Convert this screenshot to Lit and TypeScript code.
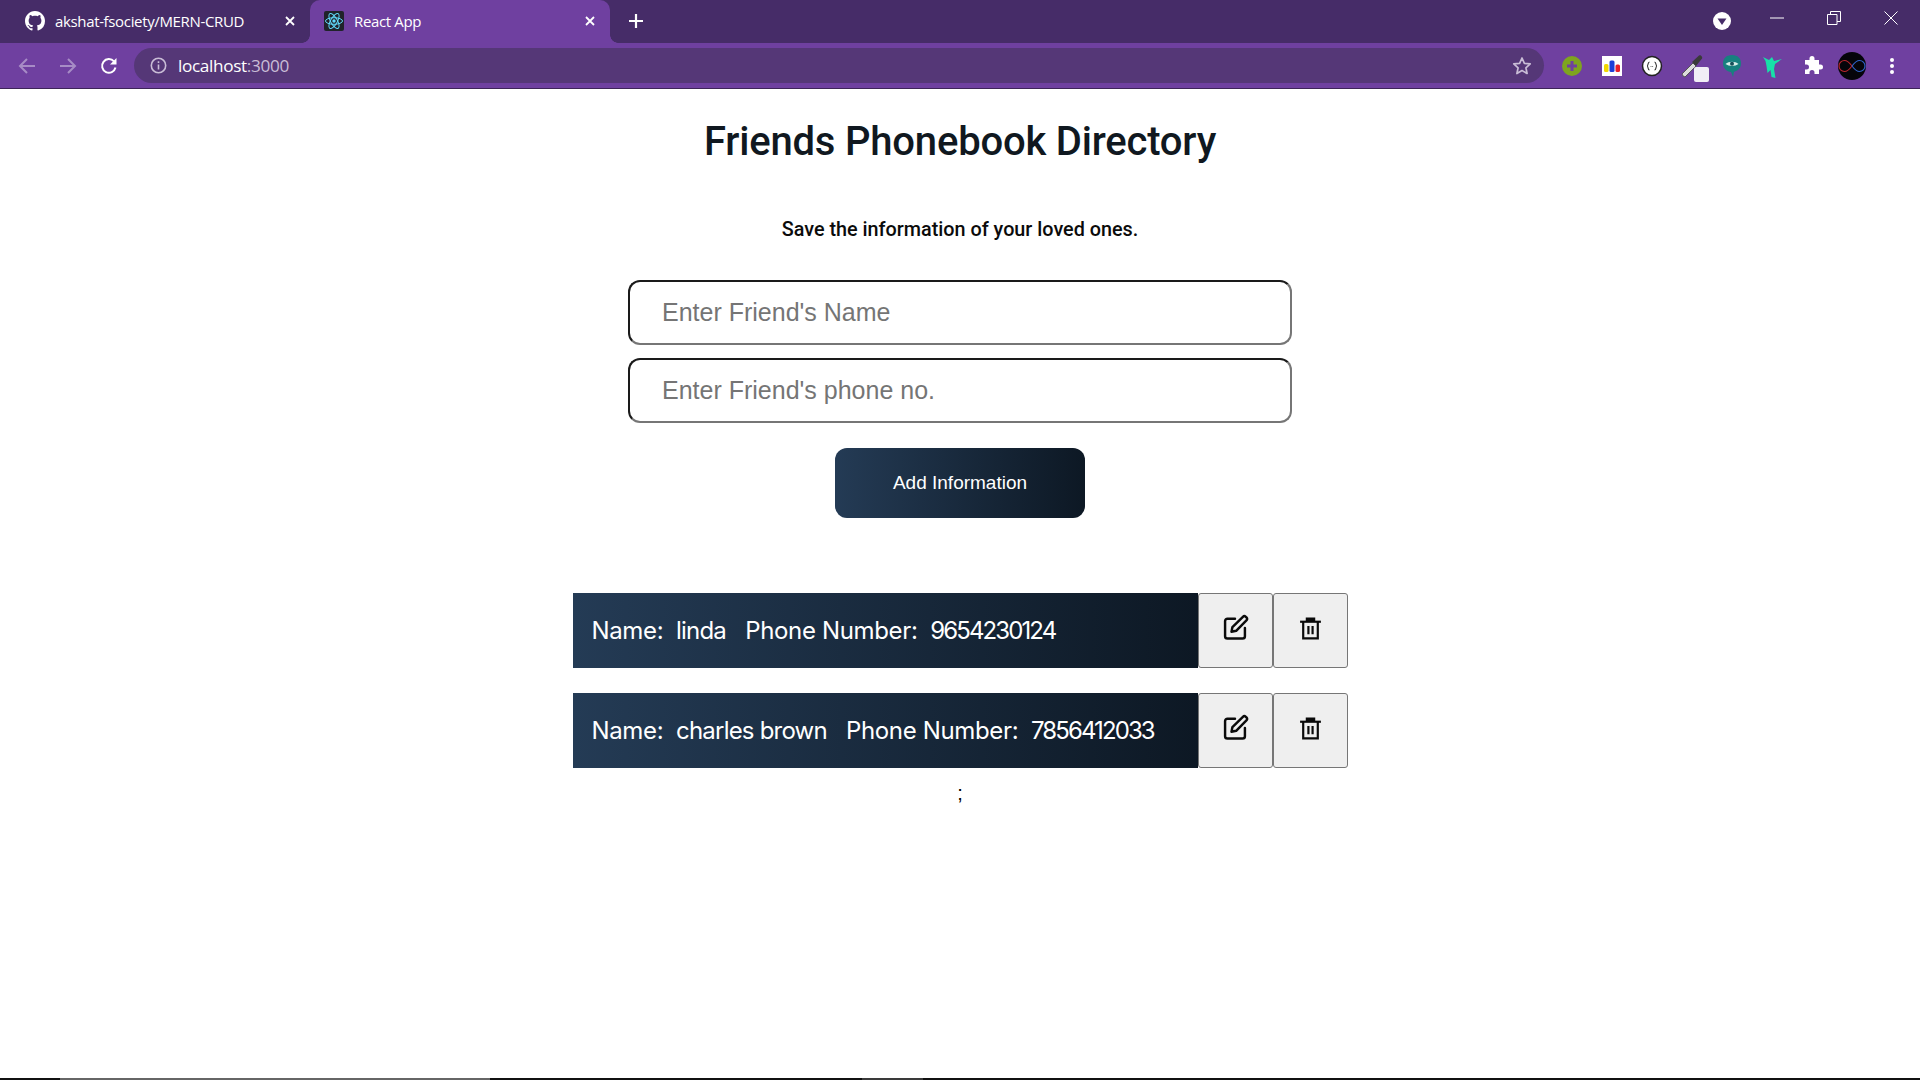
import { LitElement, html, css, svg } from "lit";
import { customElement } from "lit/decorators.js";

const close = svg`<path d="M2 2 10 10M10 2 2 10" stroke="currentColor" stroke-width="1.8" fill="none"/>`;

@customElement("app-root")
export class AppRoot extends LitElement {
  static styles = css`
    :host { display: block; height: 1080px; background: #fff; overflow: hidden; font-family: Roboto, sans-serif; }
    .shell { display: flex; flex-direction: column; height: 1080px; }
    .strip { height: 43px; flex: none; background: #462c68; display: flex; align-items: flex-start; color: #fff; }
    .tab { width: 300px; height: 43px; flex: none; display: flex; align-items: center; box-sizing: border-box; font-family: "Open Sans", sans-serif; font-size: 15px; letter-spacing: -0.35px; position: relative; }
    .tab.first { width: 310px; padding: 0 12px 1px 25px; }
    .tab.active { padding: 0 12px 1px 14px; background: #6f40a0; border-radius: 10px 10px 0 0; }
    .tab.active::before, .tab.active::after { content: ""; position: absolute; bottom: 0; width: 8px; height: 8px; background: radial-gradient(circle at 0 0, #462c68 7.5px, #6f40a0 8px); }
    .tab.active::before { left: -8px; }
    .tab.active::after { right: -8px; transform: scaleX(-1); }
    .fav { width: 20px; height: 20px; flex: none; margin-right: 10px; }
    .title { flex: 1; white-space: nowrap; overflow: hidden; }
    .x { width: 12px; height: 12px; margin: 0 2px 0 0; flex: none; color: #fff; }
    .plus { width: 16px; height: 16px; margin: 0 0 1px 18px; align-self: center; }
    .spacer { flex: 1; }
    .caps { display: flex; align-items: center; height: 36px; }
    .drop { width: 18px; height: 18px; margin-top: 6px; margin-right: 39px; }
    .cap { width: 14px; height: 14px; margin-right: 43px; }
    .cap.last { margin-right: 22px; }
    .bar { height: 45px; flex: none; background: #6f40a0; border-bottom: 1px solid #3d2458; display: flex; align-items: center; padding: 0 22px 0 18px; color: #fff; }
    .nav { width: 18px; height: 18px; margin-right: 23px; flex: none; }
    .nav.dim { color: #a78cc6; }
    .omni { flex: 1; height: 35px; background: #553777; border-radius: 18px; display: flex; align-items: center; padding: 0 12px 0 16px; margin-left: -7px; margin-right: 16px; font-family: "Open Sans", sans-serif; font-size: 17.2px; letter-spacing: -0.35px; }
    .omni .info { width: 17px; height: 17px; margin-right: 11px; color: #c9bdd6; }
    .omni .port { color: #c9bdd6; }
    .omni .star { width: 20px; height: 20px; margin-left: auto; color: #c9bdd6; }
    .ext { width: 24px; height: 24px; flex: none; margin-right: 16px; position: relative; }
    .badge { position: absolute; left: 14px; top: 13px; width: 15px; height: 15px; background: #f1eef6; border-radius: 2px; }
    .avatar { width: 28px; height: 28px; flex: none; margin-right: 16px; margin-left: -2px; }
    .dots { width: 6px; height: 18px; flex: none; margin-left: 7px; margin-right: 3px; }
    .page { flex: 1; min-height: 0; display: flex; flex-direction: column; align-items: center; color: #111; }
    h1 { margin: 25px 0 0; font-size: 40px; line-height: 56px; font-weight: 500; letter-spacing: -0.2px; color: #101820; }
    .sub { margin: 45px 0 0; font-size: 19.8px; line-height: 30px; font-weight: 500; color: #0b0b0b; }
    input { display: block; box-sizing: border-box; width: 664px; height: 65px; margin: 0; padding: 0 32px; background: #fff; border: 2px solid; border-color: #1a1a1a #767676 #767676 #1a1a1a; border-radius: 12px; font-family: "Liberation Sans", sans-serif; font-size: 25px; outline: none; }
    input::placeholder { color: #757575; opacity: 1; }
    .form { display: flex; flex-direction: column; gap: 13px; margin-top: 35px; }
    .add { margin-top: 25px; width: 250px; height: 70px; border: 0; border-radius: 12px; color: #fff; font-family: "Liberation Sans", sans-serif; font-size: 19px; background: linear-gradient(to right, #243b55, #0d1824); }
    .rows { display: flex; flex-direction: column; gap: 25px; margin-top: 75px; width: 775px; }
    .row { display: flex; height: 75px; }
    .info-cell { flex: 1; display: flex; align-items: center; padding-left: 19px; color: #fff; background: linear-gradient(to right, #243b55, #0d1824); font-family: Inter, sans-serif; font-size: 24px; letter-spacing: -0.35px; white-space: pre; }
    .val { letter-spacing: -0.8px; }
    .num { letter-spacing: -1.9px; }
    .btn { width: 75px; height: 75px; flex: none; box-sizing: border-box; padding: 0 0 5px; display: flex; align-items: center; justify-content: center; background: #efefef; border: 1.5px solid #767676; border-radius: 3px; color: #0a0a0a; }
    .btn svg { width: 28px; height: 28px; }
    .btn svg.trash { width: 25px; height: 25px; }
    .semi { margin-top: 13px; font-family: "Liberation Sans", sans-serif; font-size: 20px; line-height: 24px; color: #000; }
    .task { height: 2px; flex: none; background: #111; display: flex; }
    .task i { display: block; }
    .t1 { width: 60px; }
    .t2 { width: 430px; background: #666; }
    .t3 { width: 372px; }
    .t4 { width: 61px; background: #3a3a3a; }
  `;

  private row(name: string, phone: string) {
    return html`<div class="row">
      <div class="info-cell"><span>Name:  <span class="val">${name}</span>   Phone Number:  <span class="num">${phone}</span></span></div>
      <button class="btn" aria-label="Edit"><svg viewBox="0 0 24 24" fill="none" stroke="currentColor" stroke-width="2.1" stroke-linejoin="round" stroke-linecap="round"><path d="M12 4H5.5A2 2 0 0 0 3.5 6v13a2 2 0 0 0 2 2h13a2 2 0 0 0 2-2v-7"/><path d="M9 15.2l.8-4L19 2.2a1.4 1.4 0 0 1 2 0l1 1a1.4 1.4 0 0 1 0 2L13 14.4z"/></svg></button>
      <button class="btn" aria-label="Delete"><svg class="trash" viewBox="0 0 24 24" fill="none" stroke="currentColor" stroke-width="2.1"><path d="M2 5.500h20"/><path d="M8.500 5V2.500h7V5" fill="currentColor"/><path d="M5 5.500V21.500h14V5.500"/><path d="M10 9.500v8M14 9.500v8"/></svg></button>
    </div>`;
  }

  render() {
    return html`<div class="shell">
      <div class="strip">
        <div class="tab first">
          <svg class="fav" viewBox="0 0 16 16" fill="#fff"><path d="M8 0C3.58 0 0 3.58 0 8c0 3.54 2.29 6.53 5.47 7.59.4.07.55-.17.55-.38 0-.19-.01-.82-.01-1.49-2.01.37-2.53-.49-2.69-.94-.09-.23-.48-.94-.82-1.13-.28-.15-.68-.52-.01-.53.63-.01 1.08.58 1.23.82.72 1.21 1.87.87 2.33.66.07-.52.28-.87.51-1.07-1.78-.2-3.64-.89-3.64-3.95 0-.87.31-1.59.82-2.15-.08-.2-.36-1.02.08-2.12 0 0 .67-.21 2.2.82.64-.18 1.32-.27 2-.27s1.36.09 2 .27c1.53-1.04 2.2-.82 2.2-.82.44 1.1.16 1.92.08 2.12.51.56.82 1.27.82 2.15 0 3.07-1.87 3.75-3.65 3.95.29.25.54.73.54 1.48 0 1.07-.01 1.93-.01 2.2 0 .21.15.46.55.38A8.01 8.01 0 0 0 16 8c0-4.42-3.58-8-8-8z"/></svg>
          <span class="title">akshat-fsociety/MERN-CRUD</span>
          <svg class="x" viewBox="0 0 12 12">${close}</svg>
        </div>
        <div class="tab active">
          <svg class="fav" viewBox="0 0 20 20"><rect width="20" height="20" rx="2" fill="#20232a"/><g fill="none" stroke="#61dafb" stroke-width="1"><ellipse cx="10" cy="10" rx="8.500" ry="3.300"/><ellipse cx="10" cy="10" rx="8.500" ry="3.300" transform="rotate(60 10 10)"/><ellipse cx="10" cy="10" rx="8.500" ry="3.300" transform="rotate(120 10 10)"/></g><circle cx="10" cy="10" r="1.700" fill="#61dafb"/></svg>
          <span class="title">React App</span>
          <svg class="x" viewBox="0 0 12 12">${close}</svg>
        </div>
        <svg class="plus" viewBox="0 0 16 16"><path d="M8 1v14M1 8h14" stroke="#fff" stroke-width="2.200"/></svg>
        <div class="spacer"></div>
        <div class="caps">
          <svg class="drop" viewBox="0 0 18 18"><circle cx="9" cy="9" r="9" fill="#fff"/><path d="M4.500 6.500h9L9 13z" fill="#462c68"/></svg>
          <svg class="cap" viewBox="0 0 14 14"><path d="M0 7h14" stroke="#fff"/></svg>
          <svg class="cap" viewBox="0 0 14 14" fill="none" stroke="#fff"><path d="M.5 3.500h9.500v10H.5z"/><path d="M3.500 3.500V.5h10v10H10"/></svg>
          <svg class="cap last" viewBox="0 0 14 14"><path d="M.5.5l13 13M13.500.5l-13 13" stroke="#fff" fill="none"/></svg>
        </div>
      </div>
      <div class="bar">
        <svg class="nav dim" viewBox="0 0 18 18" fill="none" stroke="currentColor" stroke-width="2"><path d="M17 9H2M9 2 2 9l7 7"/></svg>
        <svg class="nav dim" viewBox="0 0 18 18" fill="none" stroke="currentColor" stroke-width="2"><path d="M1 9h15M9 2l7 7-7 7"/></svg>
        <svg class="nav" viewBox="0 0 18 18" fill="none" stroke="currentColor" stroke-width="2"><path d="M15.500 10.500A6.800 6.800 0 1 1 14 4.400"/><path d="M16.500 1v6.500H10" fill="currentColor" stroke="none"/></svg>
        <div class="omni">
          <svg class="info" viewBox="0 0 17 17" fill="none" stroke="currentColor" stroke-width="1.600"><circle cx="8.500" cy="8.500" r="7.200"/><path d="M8.500 7.500v5M8.500 4.200v1.700"/></svg>
          <span>localhost<span class="port">:3000</span></span>
          <svg class="star" viewBox="0 0 20 20" fill="none" stroke="currentColor" stroke-width="1.700" stroke-linejoin="round"><path d="M10 2l2.400 5.300 5.800.6-4.300 3.900 1.200 5.700-5.100-2.900-5.100 2.900 1.200-5.700-4.300-3.900 5.800-.6z"/></svg>
        </div>
        <svg class="ext" viewBox="0 0 24 24"><circle cx="12" cy="12" r="10" fill="#7ea41f"/><path d="M12 7v10M7 12h10" stroke="#6f40a0" stroke-width="3"/></svg>
        <svg class="ext" viewBox="0 0 24 24"><rect x="2" y="2" width="20" height="20" fill="#fff"/><rect x="4" y="10" width="4.500" height="8" rx="1.500" fill="#f2d600"/><rect x="9.500" y="6.500" width="5" height="11.500" rx="1.500" fill="#1d3fd8"/><rect x="15.500" y="10.500" width="4.500" height="7.500" rx="1.500" fill="#e8202a"/></svg>
        <svg class="ext" viewBox="0 0 24 24"><circle cx="12" cy="12" r="9.500" fill="#fff" stroke="#222" stroke-width="1.500"/><path d="M9.500 8c-2 0-1 4-2.500 4 1.500 0 .5 4 2.500 4M14.500 8c2 0 1 4 2.500 4-1.500 0-.5 4-2.500 4" fill="none" stroke="#333" stroke-width="1.100"/><path d="M10.500 12.500h3" stroke="#777" stroke-dasharray="1 .6"/></svg>
        <div class="ext">
          <svg viewBox="0 0 24 24" width="24" height="24"><path d="M3 22l-1-2L13 9l3 3L5 23z" fill="#dcdcdc" stroke="#555"/><path d="M12 8l7-6.500c1.500-1 4 1.500 3 3L16 12z" fill="#3a3a3a"/></svg>
          <div class="badge"></div>
        </div>
        <svg class="ext" viewBox="0 0 24 24"><path d="M12 1c6 0 9 3.500 9 8.500 0 6-5 7.500-7 8.500l-1 5-2-5C7 17.500 3 14.500 3 9.500S6 1 12 1z" fill="#17807f"/><path d="M5.500 10c3.500-3 9.500-3 13 0-3.500 2.500-9.500 2.500-13 0z" fill="#d6efe9"/><circle cx="12" cy="9.800" r="2" fill="#17505a"/></svg>
        <svg class="ext" viewBox="0 0 24 24"><path d="M3 3l6 3 3-3 2 4 8-2-7 5-1 5 1.500 9-4-1-1-7-3 3-1-7-1-5z" fill="#17e0a8"/></svg>
        <svg class="ext" viewBox="0 0 24 24"><path d="M9.500 4.500a2.500 2.500 0 0 1 5 0V6H19v4.500h1.500a2.500 2.500 0 0 1 0 5H19V20h-4.500v-1.500a2.500 2.500 0 0 0-5 0V20H5v-4.500h1.500a2.500 2.500 0 0 0 0-5H5V6h4.500z" fill="#fff"/></svg>
        <svg class="avatar" viewBox="0 0 28 28"><circle cx="14" cy="14" r="14" fill="#05050a"/><path d="M14 14c-3-4-5-5.500-7.500-5.500a5.500 5.500 0 0 0 0 11C9 19.500 11 18 14 14" fill="none" stroke="#b8252d" stroke-width="1.200"/><path d="M14 14c3 4 5 5.500 7.500 5.500a5.500 5.500 0 0 0 0-11C19 8.500 17 10 14 14" fill="none" stroke="#2e63c9" stroke-width="1.200"/></svg>
        <svg class="dots" viewBox="0 0 6 18" fill="#fff"><circle cx="3" cy="3" r="2"/><circle cx="3" cy="9" r="2"/><circle cx="3" cy="15" r="2"/></svg>
      </div>
      <div class="page">
        <h1>Friends Phonebook Directory</h1>
        <p class="sub">Save the information of your loved ones.</p>
        <div class="form">
          <input placeholder="Enter Friend's Name" />
          <input placeholder="Enter Friend's phone no." />
        </div>
        <button class="add">Add Information</button>
        <div class="rows">
          ${this.row("linda", "9654230124")}
          ${this.row("charles brown", "7856412033")}
        </div>
        <div class="semi">;</div>
      </div>
      <div class="task"><i class="t1"></i><i class="t2"></i><i class="t3"></i><i class="t4"></i></div>
    </div>`;
  }
}
